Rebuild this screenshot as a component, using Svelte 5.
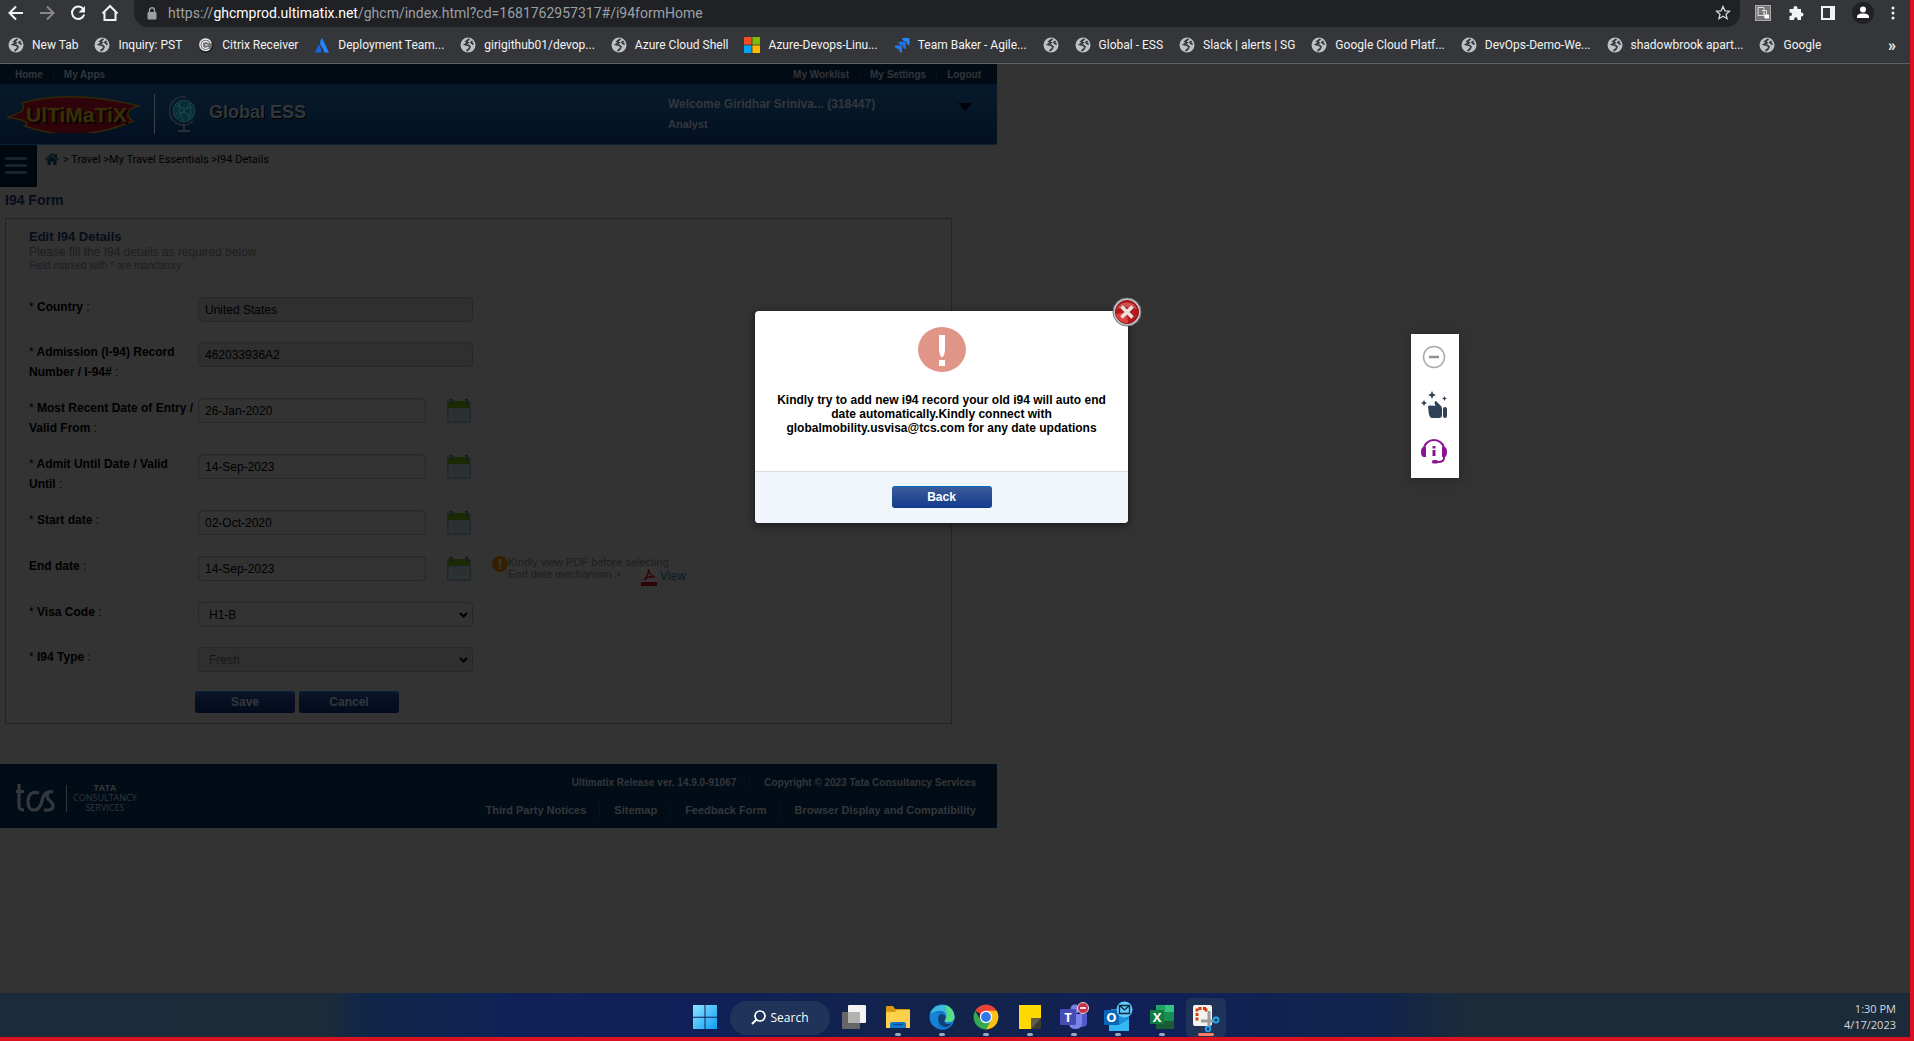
<script>
  const bookmarks = [
    { label: 'New Tab', icon: 'globe' },
    { label: 'Inquiry: PST', icon: 'globe' },
    { label: 'Citrix Receiver', icon: 'citrix' },
    { label: 'Deployment Team...', icon: 'atlassian' },
    { label: 'girigithub01/devop...', icon: 'globe' },
    { label: 'Azure Cloud Shell', icon: 'globe' },
    { label: 'Azure-Devops-Linu...', icon: 'microsoft' },
    { label: 'Team Baker - Agile...', icon: 'jira' },
    { label: '', icon: 'globe' },
    { label: 'Global - ESS', icon: 'globe' },
    { label: 'Slack | alerts | SG', icon: 'globe' },
    { label: 'Google Cloud Platf...', icon: 'globe' },
    { label: 'DevOps-Demo-We...', icon: 'globe' },
    { label: 'shadowbrook apart...', icon: 'globe' },
    { label: 'Google', icon: 'globe' }
  ];

  const fields = [
    { id: 'country', label: 'Country', required: true, kind: 'text', value: 'United States' },
    { id: 'admission', label: 'Admission (I-94) Record Number / I-94#', required: true, kind: 'text', value: '462033936A2' },
    { id: 'entry', label: 'Most Recent Date of Entry / Valid From', required: true, kind: 'date', value: '26-Jan-2020' },
    { id: 'until', label: 'Admit Until Date / Valid Until', required: true, kind: 'date', value: '14-Sep-2023' },
    { id: 'start', label: 'Start date', required: true, kind: 'date', value: '02-Oct-2020' },
    { id: 'end', label: 'End date', required: false, kind: 'date', value: '14-Sep-2023', hint: true },
    { id: 'visa', label: 'Visa Code', required: true, kind: 'select', value: 'H1-B' },
    { id: 'type', label: 'I94 Type', required: true, kind: 'select', value: 'Fresh', disabled: true }
  ];

  const apps = ['taskview', 'folder', 'edge', 'chrome', 'notes', 'teams', 'outlook', 'excel', 'snip'];
</script>

<div class="screen">
  <header class="browser">
    <div class="toolbar">
      <button class="tool" aria-label="Back"><svg width="16" height="16" viewBox="0 0 16 16"><path d="M15 8H2M8 1.5L1.5 8L8 14.5" fill="none" stroke="#f1f3f4" stroke-width="2" /></svg></button>
      <button class="tool" aria-label="Forward"><svg width="16" height="16" viewBox="0 0 16 16"><path d="M1 8H14M8 1.5L14.500 8L8 14.500" fill="none" stroke="#85878a" stroke-width="2" /></svg></button>
      <button class="tool" aria-label="Reload"><svg width="16" height="16" viewBox="0 0 16 16"><path d="M13.500 4.500A6.200 6.200 0 1 0 14.200 9.500" fill="none" stroke="#f1f3f4" stroke-width="2" /><path d="M15 1v6.500H8.500z" fill="#f1f3f4" /></svg></button>
      <button class="tool" aria-label="Home page"><svg width="18" height="18" viewBox="0 0 18 18"><path d="M3.500 8V16H14.500V8M1.500 9.500L9 2L16.500 9.500" fill="none" stroke="#f1f3f4" stroke-width="2" /></svg></button>
      <div class="address">
        <svg width="10" height="13" viewBox="0 0 10 13"><rect x="0.500" y="5" width="9" height="7.500" rx="1" fill="#9aa0a6" /><path d="M2.500 5.500V3.300a2.500 2.500 0 0 1 5 0V5.500" fill="none" stroke="#9aa0a6" stroke-width="1.400" /></svg>
        <span class="url">https://<b>ghcmprod.ultimatix.net</b>/ghcm/index.html?cd=1681762957317#/i94formHome</span>
        <button class="tool" aria-label="Bookmark this page"><svg width="16" height="16" viewBox="0 0 16 16"><path d="M8 1.500l1.900 4.300 4.600.4-3.500 3 1.100 4.500L8 11.300l-4.100 2.400L5 9.200l-3.500-3 4.600-.4z" fill="none" stroke="#d5d7da" stroke-width="1.300" /></svg></button>
      </div>
      <div class="extensions">
        <button class="tool" aria-label="Citrix extension"><svg width="16" height="16" viewBox="0 0 16 16"><rect width="16" height="16" fill="#777" /><rect x=".5" y=".5" width="15" height="15" fill="none" stroke="#aaa" /><path d="M3 2.500h6v8H3zM7 5.500h4.500v4M9.500 8v5" fill="none" stroke="#ddd" /><rect x="10" y="9.500" width="4" height="4" fill="#fff" /></svg></button>
        <button class="tool" aria-label="Extensions"><svg width="16" height="16" viewBox="0 0 16 16"><path d="M1.500 4h4V3a2 2 0 0 1 4 0v1h3.500v3.500h.5a2 2 0 0 1 0 4H13V15H9.500v-1a1.700 1.700 0 0 0-3.400 0v1H1.500v-4h.8a1.700 1.700 0 0 0 0-3.500h-.8z" fill="#f1f3f4" /></svg></button>
        <button class="tool" aria-label="Side panel"><svg width="14" height="14" viewBox="0 0 14 14"><path d="M0 0h14v14H0zM2 2v10h7V2z" fill="#f1f3f4" fill-rule="evenodd" /></svg></button>
        <button class="tool" aria-label="Profile"><svg width="22" height="22" viewBox="0 0 22 22"><circle cx="11" cy="11" r="11" fill="#202124" /><circle cx="11" cy="7.500" r="3" fill="#fff" /><path d="M5 16v-1.500C5 12 9 11.500 11 11.500s6 .5 6 3V16z" fill="#fff" /></svg></button>
        <button class="tool" aria-label="Browser menu"><svg width="4" height="14" viewBox="0 0 4 14"><circle cx="2" cy="2" r="1.500" fill="#f1f3f4" /><circle cx="2" cy="7" r="1.500" fill="#f1f3f4" /><circle cx="2" cy="12" r="1.500" fill="#f1f3f4" /></svg></button>
      </div>
    </div>
    <nav class="bookmarks" aria-label="Bookmarks">
      {#each bookmarks as mark}
        <a href="#bookmark" aria-label={mark.label || 'Untitled bookmark'}>
          {#if mark.icon === 'globe'}
            <svg width="16" height="16" viewBox="0 0 16 16"><circle cx="8" cy="8" r="7.500" fill="#bdc1c6" /><path d="M9.500 2L6 4.500l2 1.300-3 1.700 3.500.8 1.500 1.700-1 2-2.500 2M12.500 4l-1.500 1.500L13.500 7.500" fill="none" stroke="#35363a" stroke-width="1.700" /></svg>
          {:else if mark.icon === 'citrix'}
            <svg width="16" height="16" viewBox="0 0 16 16"><circle cx="8" cy="8.500" r="7.500" fill="#1d1f22" /><circle cx="7.500" cy="7.500" r="6.800" fill="#707276" /><path d="M13 6A5.700 5.700 0 1 0 11.500 12M10.700 6.200a3.500 3.500 0 1 0-.3 3.800M7 8h2.500" fill="none" stroke="#f4f4f4" stroke-width="1.200" /></svg>
          {:else if mark.icon === 'atlassian'}
            <svg width="16" height="16" viewBox="0 0 16 16"><path d="M8 1C5 5 6 8 8.500 11l2 4.500H15z" fill="#2684ff" /><path d="M4.500 7.500L1 15.500h6C7.800 12.500 6.500 9.500 4.500 7.500z" fill="#1666dc" /></svg>
          {:else if mark.icon === 'microsoft'}
            <svg width="16" height="16" viewBox="0 0 16 16"><path d="M0 0h7.600v7.600H0z" fill="#f25022" /><path d="M8.400 0H16v7.600H8.400z" fill="#7fba00" /><path d="M0 8.400h7.600V16H0z" fill="#00a4ef" /><path d="M8.400 8.400H16V16H8.400z" fill="#ffb900" /></svg>
          {:else}
            <svg width="16" height="16" viewBox="0 0 16 16"><path d="M8 1h7.500v7.500C13.500 8 12.500 7 12.500 4.500 10 4.500 8.500 3.500 8 1z" fill="#2684ff" /><path d="M4.300 4.700h7.500v7.500c-2-.5-3-1.500-3-4-2.500 0-4-1-4.500-3.500z" fill="#1b74ee" /><path d="M.5 8.400H8v7.500c-2-.5-3-1.500-3-4-2.500 0-4-1-4.500-3.500z" fill="#2079f5" /></svg>
          {/if}
          {#if mark.label}<span>{mark.label}</span>{/if}
        </a>
      {/each}
      <button class="more" aria-label="More bookmarks">»</button>
    </nav>
  </header>

  <main class="viewport">
    <div class="site">
      <nav class="toplinks" aria-label="Site">
        <div class="linkset"><a href="#home">Home</a><a href="#apps">My Apps</a></div>
        <div class="linkset"><a href="#worklist">My Worklist</a><a href="#settings">My Settings</a><a href="#logout">Logout</a></div>
      </nav>
      <div class="banner">
        <svg class="ultimatix" width="138" height="38" viewBox="0 0 138 38" role="img" aria-label="Ultimatix">
          <path d="M2 22.500Q18 17 18 14q1-3-1-6Q64-6 135 11q-12 2-12 7-1 4 5 8Q72 50 20 31q4-2-1-5Q15 24 2 22.500z" fill="#2e040a" stroke="#332706" stroke-width="1.500" />
          <text x="21" y="27" class="logo-text">UlTiMaTiX</text>
        </svg>
        <span class="divider"></span>
        <svg class="globe" width="28" height="38" viewBox="0 0 28 38"><circle cx="15" cy="16" r="11" fill="#05303a" stroke="#243a44" /><path d="M6 10q9 6 18 1M5 20q10-6 19 2M11 6q-3 10 4 20M20 7q4 9-1 18M8 24L22 8M8 8l14 16" fill="none" stroke="#1f444e" stroke-width="1" /><path d="M17 2A14 14 0 1 0 24 26" fill="none" stroke="#222d37" stroke-width="1.500" /><path d="M15 29v6M9 36h12" stroke="#26303a" stroke-width="2" /></svg>
        <h1>Global ESS</h1>
        <div class="welcome"><strong>Welcome Giridhar Sriniva... (318447)</strong><small>Analyst</small></div>
        <button class="caret" aria-label="Profile details"><svg width="14" height="8" viewBox="0 0 14 8"><path d="M0 0h14L7 8z" fill="#010308" /></svg></button>
      </div>
      <div class="crumbbar">
        <button class="burger" aria-label="Menu"><i></i><i></i><i></i></button>
        <nav class="crumbs" aria-label="Breadcrumb">
          <a href="#home" aria-label="Home"><svg width="14" height="12" viewBox="0 0 14 12"><path d="M7 0L0 6.500l1 1 6-5.500 6 5.500 1-1-2-2V1h-2v1.800z" fill="#03121b" /><path d="M2.500 7L7 3l4.500 4v5H8.300V8.500H5.700V12H2.500z" fill="#03121b" /></svg></a>
          <span>&gt; Travel &gt;My Travel Essentials &gt;I94 Details</span>
        </nav>
      </div>
      <h2>I94 Form</h2>

      <form class="panel" onsubmit={(e) => e.preventDefault()}>
        <h3>Edit I94 Details</h3>
        <p class="lead">Please fill the I94 details as required below</p>
        <p class="note">Field marked with * are mandatory</p>
        <div class="fields">
          {#each fields as f}
            <div class="row" class:dated={f.kind === 'date'}>
              <label for={f.id}>{#if f.required}<span>*</span>{' '}{/if}{f.label} <span>:</span></label>
              {#if f.kind === 'select'}
                <div class="selectbox" class:dim={f.disabled}>
                  <select id={f.id} disabled={f.disabled}><option>{f.value}</option></select>
                  <svg width="9" height="6" viewBox="0 0 9 6"><path d="M1 1l3.500 3.500L8 1" fill="none" stroke="#000" stroke-width="2" /></svg>
                </div>
              {:else if f.kind === 'text'}
                <input id={f.id} type="text" value={f.value} readonly />
              {:else}
                <div class="datebox">
                  <input id={f.id} type="text" value={f.value} />
                  <button type="button" aria-label={`Pick ${f.label}`}><svg width="24" height="25" viewBox="0 0 24 25"><rect x="0" y="3" width="24" height="22" rx="1" fill="#23282b" /><rect x="2" y="11" width="20" height="12" fill="#303334" stroke="#263339" stroke-width="1" /><rect x="5" y="12" width="14" height="8" fill="#2c2e2f" /><path d="M0 3h23v7H0z" fill="#1c2a05" /><path d="M4 1v5M19.500 1v5" stroke="#14171c" stroke-width="3" /><path d="M3.500 2v3M19 2v3" stroke="#2b3037" stroke-width="1" /></svg></button>
                  {#if f.hint}
                    <div class="hint">
                      <svg width="16" height="16" viewBox="0 0 16 16"><circle cx="8" cy="8" r="8" fill="#332000" /><path d="M8 3v6.500M8 11v2" stroke="#3b352a" stroke-width="2" /></svg>
                      <p>Kindly view PDF before selecting<br />End date mechanism &gt;</p>
                      <a href="#pdf"><svg width="16" height="20" viewBox="0 0 16 20"><path d="M0 0h11l5 5v15H0z" fill="#373536" /><path d="M0 16h16v4H0z" fill="#2d0204" /><path d="M3 14Q8 9 7.500 3Q8 9 14 11Q8 9.500 3 14z" fill="none" stroke="#360609" stroke-width="1.500" /></svg>View</a>
                    </div>
                  {/if}
                </div>
              {/if}
            </div>
          {/each}
        </div>
        <div class="actions"><button>Save</button><button type="button">Cancel</button></div>
      </form>

      <footer>
        <div class="tcs">
          <svg width="44" height="28" viewBox="0 0 44 28"><path d="M3 0v22q0 4 5 4M0 7.500h8M23 9q-10-3-11 8 0 10 7 9 5-1 7-9Q28 6 37 8M28 26q9 1 9-4 0-3-4-6-3-3-1-7" fill="none" stroke="#34383d" stroke-width="3.200" /></svg>
          <i></i>
          <p><b>TATA</b>CONSULTANCY<br />SERVICES</p>
        </div>
        <div class="legal">
          <div class="linkset release"><span>Ultimatix Release ver. 14.9.0-91067</span><span>Copyright © 2023 Tata Consultancy Services</span></div>
          <div class="linkset"><a href="#notices">Third Party Notices</a><a href="#sitemap">Sitemap</a><a href="#feedback">Feedback Form</a><a href="#display">Browser Display and Compatibility</a></div>
        </div>
      </footer>
    </div>

    <div class="dialog" role="dialog" aria-modal="true" aria-label="Alert">
      <button class="close" aria-label="Close"><svg width="30" height="30" viewBox="0 0 30 30"><circle cx="15" cy="15" r="14" fill="#c4c4c8" stroke="#77777b" /><circle cx="15" cy="15" r="11.500" fill="#b5191d" stroke="#8e1013" /><path d="M15 15L4 17a11 11 0 0 0 12 9z" fill="#e04040" /><path d="M5 12a11 11 0 0 1 20 0q-10-4-20 0z" fill="#cc4f52" /><path d="M9.500 9.500l11 11M20.500 9.500l-11 11" stroke="#e6e3e0" stroke-width="3.600" /></svg></button>
      <div class="message">
        <svg width="48" height="45" viewBox="0 0 48 45"><ellipse cx="24" cy="22.500" rx="24" ry="22.500" fill="#e19587" /><path d="M21 8h6v15q-.5 5-2 7h-2q-1.500-2-2-7zM21 33h6v6h-6z" fill="#fff" /></svg>
        <p>Kindly try to add new i94 record your old i94 will auto end date automatically.Kindly connect with globalmobility.usvisa@tcs.com for any date updations</p>
      </div>
      <div class="dialog-foot"><button>Back</button></div>
    </div>

    <aside class="assist" aria-label="Assistant">
      <button aria-label="Minimise"><svg width="24" height="24" viewBox="0 0 24 24"><circle cx="12" cy="12" r="10.500" fill="#fff" stroke="#aaa" stroke-width="1.500" /><path d="M7 12h10" stroke="#909090" stroke-width="2.500" /></svg></button>
      <button aria-label="Feedback"><svg width="28" height="28" viewBox="0 -3 28 28"><path d="M8 14q0-1.500 1.500-1.500l6 .3L14.500 10q0-2 1.500-2 3 3 5 5 1 1 1 2.500V22q0 3-3 3h-7Q10 25 9 21.500z" fill="#2d4257" /><rect x="23" y="14" width="4" height="11" rx="2" fill="#2d4257" /><path d="M12 -2l1.200 2.800L16 2l-2.800 1.200L12 6l-1.200-2.800L8 2l2.800-1.200zM4 7l1 2 2 1-2 1-1 2-1-2-2-1 2-1zM24.500 3l.8 1.700 1.700.8-1.700.8-.8 1.700-.8-1.700-1.700-.8 1.700-.8z" fill="#2d4257" /></svg></button>
      <button aria-label="Help desk"><svg width="28" height="26" viewBox="0 0 28 26"><path d="M4 12V10a10 9 0 0 1 20 0v9q0 4-6 4h-3" fill="none" stroke="#8c1492" stroke-width="2" /><path d="M6 8v10H4Q1 18 1 13t3-5zM22 8v10h2q3 0 3-5t-3-5z" fill="#8c1492" /><rect x="12" y="21" width="6" height="3.500" rx="1.500" fill="#8c1492" /><path d="M12.500 7h3v2.500h-3zM12.500 11h3v6h-3z" fill="#8c1492" /></svg></button>
    </aside>
  </main>

  <div class="taskbar">
    <div class="apps">
      <button class="app" aria-label="Start"><svg width="24" height="26" viewBox="0 0 24 26"><defs><linearGradient id="win" x2="1" y2="1"><stop stop-color="#8be4ff" /><stop offset="1" stop-color="#119df5" /></linearGradient></defs><path d="M0 1h11.500v11.700H0zM12.500 1H24v11.700H12.500zM0 13.700h11.500V25H0zM12.500 13.700H24V25H12.500z" fill="url(#win)" /></svg></button>
      <button class="search"><svg width="15" height="15" viewBox="0 0 15 15"><circle cx="9" cy="6" r="5" fill="none" stroke="#fff" stroke-width="1.700" /><path d="M5.500 9.500L1 14" stroke="#fff" stroke-width="2" /></svg>Search</button>
      {#each apps as app}
        <button class="app" class:current={app === 'snip'} class:running={app !== 'taskview'} aria-label={app}>
          {#if app === 'taskview'}
            <svg width="26" height="26" viewBox="0 0 26 26"><rect x="7" y="1" width="18" height="18" rx="1" fill="#f3f3f3" /><rect x="1" y="8" width="18" height="17" rx="1" fill="#666" /><path d="M7 8h12v11H7z" fill="#b2b2b2" /></svg>
          {:else if app === 'folder'}
            <svg width="26" height="26" viewBox="0 0 26 26"><path d="M1 3q0-1 1-1h6l2 3h14q1 0 1 1v18H1z" fill="#dc9a10" /><path d="M1 8h9l2-2h13v18H1z" fill="#ffd04c" /><path d="M5 24v-4q0-2 2-2h12q2 0 2 2v4z" fill="#117ccf" /><path d="M8 20.500h10" stroke="#094d8c" stroke-width="1.500" /></svg>
          {:else if app === 'edge'}
            <svg width="26" height="26" viewBox="0 0 26 26"><circle cx="13" cy="13" r="12.500" fill="#1583d8" /><path d="M1 10A12.500 12.500 0 0 1 25.500 13q0 5-6 5-4 0-4-2 2-2 1-5Q13 4 1 10z" fill="#38b9dd" /><path d="M16 .8A12.500 12.500 0 0 1 25.500 13q0 5-6 5-4 0-4-2 4-5 .5-15z" fill="#58dc86" /><path d="M1 10Q14 3 17 11q1 3-1 5-2 4 3.500 4 3 0 5-1-5 8-13 6.500Q7 23 9 15q0-3 3-5Q5 7 1 10z" fill="#1477cf" /><path d="M9 14q0-3 3-4 5 1 4.500 4-2 3-.5 5 3 2 7 0-5 6-10 3-4-3-4-8z" fill="#123f78" /></svg>
          {:else if app === 'chrome'}
            <svg width="26" height="26" viewBox="0 0 26 26"><path d="M2.200 6.800A12.500 12.500 0 0 1 23.800 6.800L13 13z" fill="#ea4335" /><path d="M23.800 6.800A12.500 12.500 0 0 1 13 25.500L13 13 13 6.800z" fill="#fbc116" /><path d="M2.200 6.800A12.500 12.500 0 0 0 13 25.500L18.400 16 13 13 7.600 16z" fill="#34a853" /><circle cx="13" cy="13" r="6.200" fill="#fff" /><circle cx="13" cy="13" r="4.900" fill="#3477ed" /></svg>
          {:else if app === 'notes'}
            <svg width="26" height="26" viewBox="0 0 26 26"><path d="M2 1h22v13L14 25H2z" fill="#ffda00" /><path d="M14 25V14h10v11z" fill="#3b3a36" /><path d="M14 25L24 14H14z" fill="#615d4d" /></svg>
          {:else if app === 'teams'}
            <svg width="30" height="30" viewBox="0 0 30 30"><circle cx="16" cy="7" r="4.500" fill="#7b83eb" /><circle cx="24" cy="9" r="3.500" fill="#5059c9" /><path d="M20 12h8v9q0 4-5 4h-3z" fill="#5059c9" /><path d="M10 12h13v9q0 6-6.500 6T10 21z" fill="#7b83eb" /><rect x="1" y="7" width="16" height="16" rx="1" fill="#454db5" /><text x="9" y="20" class="tile-letter">T</text><circle cx="24" cy="6" r="5.500" fill="#c4314b" stroke="#eed4da" /><path d="M21 6h6" stroke="#fff" stroke-width="1.700" /></svg>
          {:else if app === 'outlook'}
            <svg width="30" height="32" viewBox="0 0 30 32"><path d="M8 8h18v20H8z" fill="#1990dc" /><path d="M6 18l10 6 10-6v12H6z" fill="#35b8f1" /><rect x="1" y="9" width="15" height="15" rx="1" fill="#0866b8" /><text x="8.500" y="21" class="tile-letter">O</text><circle cx="21.500" cy="8.500" r="8" fill="#62c9fa" /><path d="M16.500 4.500h10v8h-10zM16.500 4.500l5 4.500 5-4.500" fill="none" stroke="#0d283c" stroke-width="1.300" /></svg>
          {:else if app === 'excel'}
            <svg width="26" height="26" viewBox="0 0 26 26"><path d="M7 1h18v24H7z" fill="#185c37" /><path d="M7 1h9v12H7z" fill="#21a366" /><path d="M16 1h9v7h-9z" fill="#33c481" /><path d="M7 8h9v9H7zM16 8h9v9h-9z" fill="#188d52" /><rect x="1" y="6" width="14" height="14" rx="1" fill="#107c41" /><text x="8" y="18" class="tile-letter">X</text></svg>
          {:else}
            <svg width="28" height="28" viewBox="0 0 28 28"><rect x="1" y="1" width="19" height="21" rx="2" fill="#f4f2f1" /><path d="M14 4.500H5v12M14 4.500v3" fill="none" stroke="#d83b01" stroke-width="2.800" stroke-dasharray="3 1.500" /><path d="M17 7v16M9 17h14" stroke="#9b9b9b" stroke-width="3" /><circle cx="24" cy="16" r="2.500" fill="#123060" stroke="#22a7f2" stroke-width="1.800" /><circle cx="16" cy="25" r="2.300" fill="#123060" stroke="#22a7f2" stroke-width="1.800" /></svg>
          {/if}
        </button>
      {/each}
    </div>
    <div class="clock"><span>1:30 PM</span><span>4/17/2023</span></div>
  </div>
</div>

<style>
  :global(body) { margin: 0; }
  .screen {
    box-sizing: border-box;
    min-height: 100vh;
    display: flex;
    flex-direction: column;
    border-right: 4px solid #db1020;
    border-bottom: 4px solid #db1020;
    background: #333;
    color: #000;
    font-family: 'Liberation Sans', Arial, sans-serif;
    font-size: 12px;
    overflow-x: hidden;
  }
  button { padding: 0; border: 0; background: none; font: inherit; color: inherit; }
  a { color: inherit; text-decoration: none; }
  h1, h2, h3, p { margin: 0; }
  svg { display: block; flex: none; }

  .browser {
    background: #35363a;
    border-bottom: 1px solid #5f6064;
    font-family: Roboto, 'Open Sans', sans-serif;
  }
  .toolbar { display: flex; align-items: center; height: 26px; padding: 0 0 1px 8px; gap: 15px; }
  .tool { display: flex; }
  .address {
    flex: 1;
    display: flex;
    align-items: center;
    height: 27px;
    box-sizing: border-box;
    padding: 0 9px 0 13px;
    border-radius: 0 0 14px 14px;
    background: #202124;
  }
  .url { flex: 1; margin-left: 11px; color: #9aa0a6; font-size: 14px; line-height: 20px; white-space: nowrap; }
  .url b { color: #fff; font-weight: 400; }
  .extensions { display: flex; align-items: center; gap: 17px; padding-right: 15px; }
  .bookmarks { display: flex; align-items: center; height: 36px; padding: 0 14px 0 8px; gap: 16px; color: #f1f3f4; font-size: 12px; }
  .bookmarks a { display: flex; align-items: center; gap: 8px; white-space: nowrap; }
  .more { margin-left: auto; font-size: 16px; font-weight: 700; }

  .viewport { position: relative; flex: 1; }
  .site { width: 997px; max-width: 100%; }
  .toplinks {
    display: flex;
    justify-content: space-between;
    align-items: center;
    height: 20px;
    padding: 0 16px 0 15px;
    background: #020b14;
    color: #33363a;
    font-weight: 700;
    font-size: 10px;
  }
  .linkset { display: flex; }
  .linkset > * + * { margin-left: 10px; padding-left: 10px; border-left: 1px solid #06121d; }
  .banner {
    display: flex;
    align-items: center;
    height: 61px;
    box-sizing: border-box;
    padding: 0 25px 0 5px;
    background: linear-gradient(#06192a, #051627 50%, #020f21);
    border-bottom: 1px solid #0a2236;
    color: #34373b;
  }
  .logo-text { font-family: 'Liberation Sans', Arial, sans-serif; font-weight: 700; font-size: 21px; fill: #353104; text-shadow: 2px 2px 0 #0d0203; }
  .divider { width: 1px; height: 40px; margin: 0 14px 0 11px; background: #3a4046; }
  h1 { margin: 0 0 4px 12px; font-size: 18px; line-height: 24px; text-shadow: 1px 1px 0 #000; }
  .welcome { display: flex; flex-direction: column; width: 272px; margin-left: auto; gap: 4px; font-weight: 700; font-size: 12px; line-height: 16px; }
  .welcome small { font-size: 11px; }
  .caret { display: flex; margin: 0 0 15px 18px; }
  .crumbbar { display: flex; align-items: flex-start; }
  .burger { box-sizing: border-box; display: flex; flex-direction: column; justify-content: center; gap: 4px; width: 37px; height: 42px; padding: 0 5px 2px; background: #00080f; }
  .burger i { width: 22px; height: 3px; background: #1a2329; }
  .crumbs { display: flex; align-items: center; gap: 4px; height: 28px; padding-left: 8px; font-family: Roboto, 'Open Sans', sans-serif; font-size: 11px; }
  h2 { padding-left: 5px; font-size: 14px; line-height: 26px; color: #080c1a; }

  .panel { box-sizing: border-box; margin: 5px 45px 0 5px; padding: 10px 23px 10px; border: 1px solid #232323; }
  h3 { font-size: 13px; line-height: 16px; color: #080c1a; }
  .lead { color: #1e1e1e; font-size: 12px; line-height: 15px; }
  .note { color: #1e1e1e; font-size: 10px; line-height: 12px; }
  .fields { display: flex; flex-direction: column; gap: 16px; margin-top: 25px; }
  .row { display: grid; grid-template-columns: 165px 1fr; gap: 4px; align-items: start; min-height: 29px; }
  .dated { min-height: 30px; }
  label { font-weight: 700; line-height: 20px; }
  label span { font-weight: 400; }
  input, select {
    box-sizing: border-box;
    width: 275px;
    height: 25px;
    margin: 0;
    padding: 0 6px;
    border: 1px solid #282829;
    border-radius: 4px;
    background: #333;
    color: #000;
    font: inherit;
  }
  input { box-shadow: inset 0 1px 1px #2e2e2e; }
  input:read-only { background: #2f2f2f; }
  select { appearance: none; padding: 0 10px; opacity: 1; }
  .selectbox { display: grid; grid-template-columns: 275px; align-items: center; }
  .selectbox > * { grid-area: 1 / 1; }
  .selectbox svg { justify-self: end; margin-right: 5px; pointer-events: none; }
  .dim select { background: #2f2f2f; color: #161616; }
  .datebox { display: flex; align-items: flex-start; height: 25px; }
  .datebox input { width: 228px; background: #333; }
  .datebox > button { margin-left: 21px; }
  .hint { display: flex; align-items: flex-start; margin-left: 21px; color: #1e1e1e; }
  .hint p { width: 133px; font-size: 11px; line-height: 12px; white-space: nowrap; }
  .hint a { display: flex; align-items: center; gap: 3px; margin-top: 10px; color: #061c2c; }
  .actions { display: flex; gap: 4px; margin: 15px 0 0 166px; }
  .actions button, .dialog-foot button {
    box-sizing: border-box;
    width: 100px;
    height: 22px;
    padding-bottom: 2px;
    border-radius: 3px;
    border-top: 1px solid #04203a;
    background: linear-gradient(#0b1428, #020b1c);
    color: #34373c;
    font-weight: 700;
  }

  footer {
    display: flex;
    justify-content: space-between;
    align-items: center;
    height: 64px;
    margin-top: 40px;
    padding: 0 21px 0 16px;
    background: #020c16;
    color: #34373a;
  }
  .tcs { display: flex; align-items: center; gap: 6px; margin-top: 4px; }
  .tcs i { width: 1px; height: 27px; background: #34373a; }
  .tcs p { font-family: 'Open Sans', 'Noto Sans', sans-serif; font-size: 9px; line-height: 10px; text-align: center; }
  .tcs b { display: block; }
  .legal { display: flex; flex-direction: column; align-items: flex-end; gap: 13px; font-weight: 700; font-size: 11px; line-height: 14px; }
  .legal .linkset > * + * { margin-left: 13px; padding-left: 14px; }
  .release { font-size: 10px; }

  .dialog {
    position: absolute;
    left: 755px;
    top: 247px;
    width: 373px;
    border-radius: 4px;
    background: #fff;
    box-shadow: 0 2px 8px #161616;
  }
  .close { position: absolute; top: -14px; right: -14px; }
  .message { display: flex; flex-direction: column; align-items: center; padding: 16px 20px 36px; }
  .message p { margin-top: 21px; text-align: center; font-weight: 700; line-height: 14px; }
  .dialog-foot { display: flex; justify-content: center; padding: 14px 0 15px; border-top: 1px solid #d9dce0; border-radius: 0 0 4px 4px; background: #f1f6fd; }
  .dialog-foot button { border-top: 1px solid #0068bf; background: linear-gradient(#3c5c9a, #113b8c); color: #fff; }

  .assist {
    position: absolute;
    left: 1411px;
    top: 270px;
    box-sizing: border-box;
    display: flex;
    flex-direction: column;
    align-items: center;
    gap: 21px;
    width: 48px;
    padding: 11px 2px 13px 0;
    background: #fff;
    box-shadow: 0 2px 10px #262626;
  }

  .taskbar {
    display: grid;
    grid-template-columns: 1fr auto 1fr;
    height: 44px;
    background: linear-gradient(90deg, #1b2b3c, #1b2b39 17%, #102747 19%, #0f2258 27%, #102058 36%, #12244a 50%, #102058 60%, #11244c 72%, #1b2b39 77%, #1b2b3a);
    color: #fff;
    font-family: 'Open Sans', 'Noto Sans', sans-serif;
  }
  .apps { grid-column: 2; display: flex; align-items: stretch; gap: 4px; }
  .app { position: relative; box-sizing: border-box; display: flex; align-items: center; justify-content: center; width: 40px; padding-top: 4px; border-radius: 5px; }
  .current { margin-top: 5px; padding-top: 0; background: #1f3358; }
  .running::after { content: ''; position: absolute; left: 17px; bottom: 1px; width: 6px; height: 3px; border-radius: 2px; background: #9da5ba; }
  .current::after { left: 12px; width: 16px; background: #fb7c62; }
  .search { display: flex; align-items: center; justify-content: center; gap: 5px; width: 100px; height: 34px; margin: 8px 0 0 1px; padding-bottom: 1px; border-radius: 17px; background: #20345a; font-size: 12px; }
  .tile-letter { fill: #fff; font-family: 'Open Sans', sans-serif; font-size: 13px; font-weight: 700; text-anchor: middle; }
  .clock { display: flex; flex-direction: column; align-items: flex-end; justify-content: center; padding: 4px 14px 0 0; color: #d5dade; font-size: 11px; line-height: 16px; }
</style>
